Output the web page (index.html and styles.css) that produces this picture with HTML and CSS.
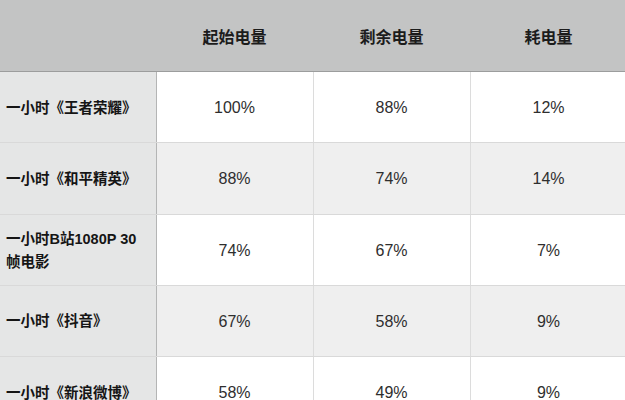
FILE: index.html
```html
<!DOCTYPE html>
<html lang="zh">
<head>
<meta charset="utf-8">
<link rel="stylesheet" href="styles.css">
</head>
<body>
<table class="battery">
  <colgroup>
    <col class="c1"><col class="c2"><col class="c3"><col class="c4">
  </colgroup>
  <thead>
    <tr>
      <th class="corner"></th>
      <th>起始电量</th>
      <th>剩余电量</th>
      <th>耗电量</th>
    </tr>
  </thead>
  <tbody>
    <tr class="odd">
      <td class="label">一小时《王者荣耀》</td><td>100%</td><td>88%</td><td>12%</td>
    </tr>
    <tr class="even">
      <td class="label">一小时《和平精英》</td><td>88%</td><td>74%</td><td>14%</td>
    </tr>
    <tr class="odd">
      <td class="label">一小时B站1080P 30<br>帧电影</td><td>74%</td><td>67%</td><td>7%</td>
    </tr>
    <tr class="even">
      <td class="label">一小时《抖音》</td><td>67%</td><td>58%</td><td>9%</td>
    </tr>
    <tr class="odd">
      <td class="label">一小时《新浪微博》</td><td>58%</td><td>49%</td><td>9%</td>
    </tr>
  </tbody>
</table>
</body>
</html>
```

FILE: styles.css
```css
html, body {
  margin: 0;
  padding: 0;
  background: #ffffff;
  overflow: hidden;
}
.battery {
  border-collapse: collapse;
  table-layout: fixed;
  width: 627px;
  font-family: "Liberation Sans", "Noto Sans CJK SC", sans-serif;
  color: #222;
}
.c1 { width: 156px; }
.c2 { width: 157px; }
.c3 { width: 157px; }
.c4 { width: 157px; }
.battery th {
  height: 71px;
  padding: 0;
  background: #c3c4c4;
  border-bottom: 1px solid #9c9d9d;
  font-family: "Noto Sans CJK SC", sans-serif;
  font-weight: 700;
  font-size: 16px;
  color: #1c1c1c;
  text-align: center;
  vertical-align: middle;
}
.battery td {
  height: 68.25px;
  padding: 2px 0 0 0;
  border-right: 1px solid #dcdcdc;
  border-bottom: 1px solid #d9d9d9;
  text-align: center;
  vertical-align: middle;
  font-size: 16px;
  color: #2e2e2e;
}
.battery tr.even td { background: #efefef; }
.battery tr.odd td { background: #ffffff; }
.battery td.label {
  background: #e5e6e6;
  border-right: 1px solid #b4b5b5;
  text-align: left;
  padding: 2px 2px 0 6px;
  font-weight: 700;
  font-size: 14.5px;
  line-height: 23px;
  color: #151515;
  white-space: nowrap;
}
.battery tr.even td.label, .battery tr.odd td.label { background: #e5e6e6; }
```
